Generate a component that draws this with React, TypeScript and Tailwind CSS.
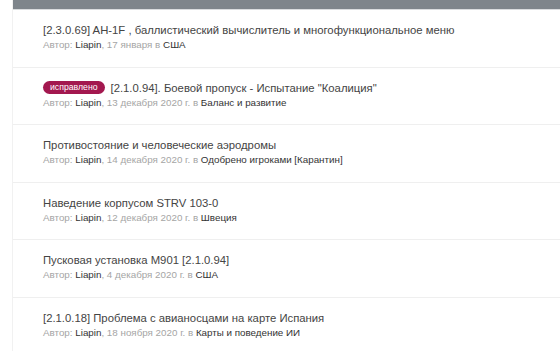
import React from "react";

interface Topic {
  title: string;
  date: string;
  forum: string;
  fixed?: boolean;
}

const topics: Topic[] = [
  {
    title: "[2.3.0.69] AH-1F , баллистический вычислитель и многофункциональное меню",
    date: "17 января",
    forum: "США",
  },
  {
    title: "[2.1.0.94]. Боевой пропуск - Испытание \"Коалиция\"",
    date: "13 декабря 2020 г.",
    forum: "Баланс и развитие",
    fixed: true,
  },
  {
    title: "Противостояние и человеческие аэродромы",
    date: "14 декабря 2020 г.",
    forum: "Одобрено игроками [Карантин]",
  },
  {
    title: "Наведение корпусом STRV 103-0",
    date: "12 декабря 2020 г.",
    forum: "Швеция",
  },
  {
    title: "Пусковая установка M901 [2.1.0.94]",
    date: "4 декабря 2020 г.",
    forum: "США",
  },
  {
    title: "[2.1.0.18] Проблема с авианосцами на карте Испания",
    date: "18 ноября 2020 г.",
    forum: "Карты и поведение ИИ",
  },
];

export default function App() {
  return (
    <div className="min-h-[351px] bg-white font-['Liberation_Sans',Arial,sans-serif] overflow-hidden">
      <div className="ml-[12px] border-l border-[#f1f1f1]">
        {/* header strip */}
        <div className="h-[10px] bg-[#7e858b] border-b border-[#d9dcde]" />

        {topics.map((t, i) => (
          <div
            key={i}
            className="pl-[30px] pr-4 pt-[13px] pb-[14.5px] border-b border-[#efefef]"
          >
            <div className="flex items-center text-[11.3px] leading-[14px] text-[#444] whitespace-nowrap">
              {t.fixed && (
                <span className="mr-[6px] inline-flex items-center h-[13px] px-[7px] rounded-full bg-[#a3184f] text-white text-[8.7px] leading-none">
                  исправлено
                </span>
              )}
              <span>{t.title}</span>
            </div>
            <div className="mt-[1px] text-[9.8px] leading-[14px] text-[#a5a5a5] whitespace-nowrap">
              Автор: <span className="text-[#333]">Liapin</span>, {t.date} в{" "}
              <span className="text-[#333]">{t.forum}</span>
            </div>
          </div>
        ))}
      </div>
    </div>
  );
}
